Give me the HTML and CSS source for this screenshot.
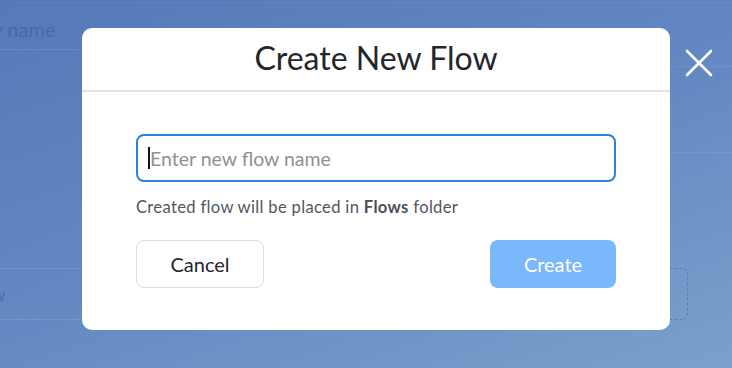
FILE: index.html
```html
<!DOCTYPE html>
<html>
<head>
<meta charset="utf-8">
<link rel="stylesheet" href="styles.css">
</head>
<body>
<div class="page">
  <div class="topline"></div>
  <div class="search">
    <span class="search-text">Enter flow name</span>
    <svg class="search-icon" width="20" height="20" viewBox="0 0 20 20"><circle cx="9" cy="9" r="7" fill="none" stroke="#4a6aa5" stroke-width="2"/></svg>
  </div>
  <div class="rline r1"></div>
  <div class="rline r2"></div>
  <div class="lower">
    <div class="left-row"><span>New Flow</span></div>
    <div class="dash"></div>
  </div>
</div>

<div class="overlay">
  <div class="modal">
    <div class="modal-header">Create New Flow</div>
    <div class="modal-body">
      <div class="field"><span class="caret"></span><span class="placeholder">Enter new flow name</span></div>
      <p class="hint">Created flow will be placed in <b>Flows</b> folder</p>
      <div class="actions">
        <button class="btn btn-cancel">Cancel</button>
        <button class="btn btn-create">Create</button>
      </div>
    </div>
  </div>
  <button class="close" aria-label="Close">
    <svg width="28" height="28" viewBox="0 0 28 28"><path d="M2 2 L26 26 M26 2 L2 26" stroke="#fff" stroke-width="2.6" stroke-linecap="round"/></svg>
  </button>
</div>
</body>
</html>
```
FILE: styles.css
```css
* { box-sizing: border-box; }
html, body { margin: 0; padding: 0; }
body {
  width: 732px;
  height: 368px;
  overflow: hidden;
  font-family: Lato, "Open Sans", sans-serif;
  background: linear-gradient(160deg, #5579b9 0%, #6388c2 50%, #7aa1cc 100%);
  position: relative;
}
.page { position: relative; height: 368px; }
.topline { height: 3px; margin-left: 16px; border-bottom: 1px solid rgba(255,255,255,0.06); }
.search {
  display: flex; align-items: center; justify-content: space-between;
  width: 323px; height: 47px; margin-left: -88px;
  border-bottom: 1px solid rgba(255,255,255,0.1);
  padding: 6px 12px 0 0;
}
.search-text { font-size: 20px; color: #4a69a4; }
.search-icon { margin-top: 18px; }
.rline { margin-left: 670px; border-top: 1px solid rgba(255,255,255,0.08); }
.r1 { margin-top: 16px; }
.r2 { margin-top: 85px; }
.lower { display: flex; justify-content: space-between; margin-top: 115px; }
.left-row {
  width: 300px; height: 52px; margin-left: -70px;
  border-top: 1px solid rgba(255,255,255,0.1);
  border-bottom: 1px solid rgba(255,255,255,0.1);
  display: flex; align-items: center; font-size: 17px; color: #4e6fac;
}
.dash {
  width: 40px; height: 52px; margin-right: 44px;
  border: 1.5px dashed #5a7fb8; border-radius: 6px;
}

.overlay { position: absolute; inset: 0; }
.modal {
  position: absolute; left: 82px; top: 28px;
  width: 588px; height: 302px;
  background: #fff; border-radius: 10px;
  display: flex; flex-direction: column;
}
.modal-header {
  height: 64px;
  border-bottom: 2px solid #e1e3e6;
  display: flex; align-items: center; justify-content: center;
  font-size: 32px; color: #23262b; padding-bottom: 4px;
}
.modal-body { padding: 42px 54px 0 54px; }
.field {
  height: 48px; border: 2px solid #2f80d9; border-radius: 8px;
  display: flex; align-items: center; padding-left: 10px;
}
.caret { width: 2px; height: 22px; background: #111; margin-right: 0px; }
.placeholder { font-size: 19.5px; color: #8d929a; }
.hint { margin: 15px 0 0 0; font-size: 16.6px; letter-spacing: 0.32px; color: #51575f; line-height: 20px; }
.hint b { font-weight: 700; color: #4a5058; }
.actions { display: flex; justify-content: space-between; margin-top: 23px; }
.btn {
  height: 48px; border-radius: 8px; font-family: Lato, sans-serif; font-size: 20px;
  cursor: pointer;
}
.btn-cancel { width: 128px; background: #fff; border: 1.5px solid #dcdcdc; color: #23262b; }
.btn-create { width: 126px; background: #78b8fb; border: none; color: #fff; }
.close {
  position: absolute; left: 685px; top: 49px;
  background: none; border: none; padding: 0; width: 28px; height: 28px;
}
.close svg { display: block; }
```
